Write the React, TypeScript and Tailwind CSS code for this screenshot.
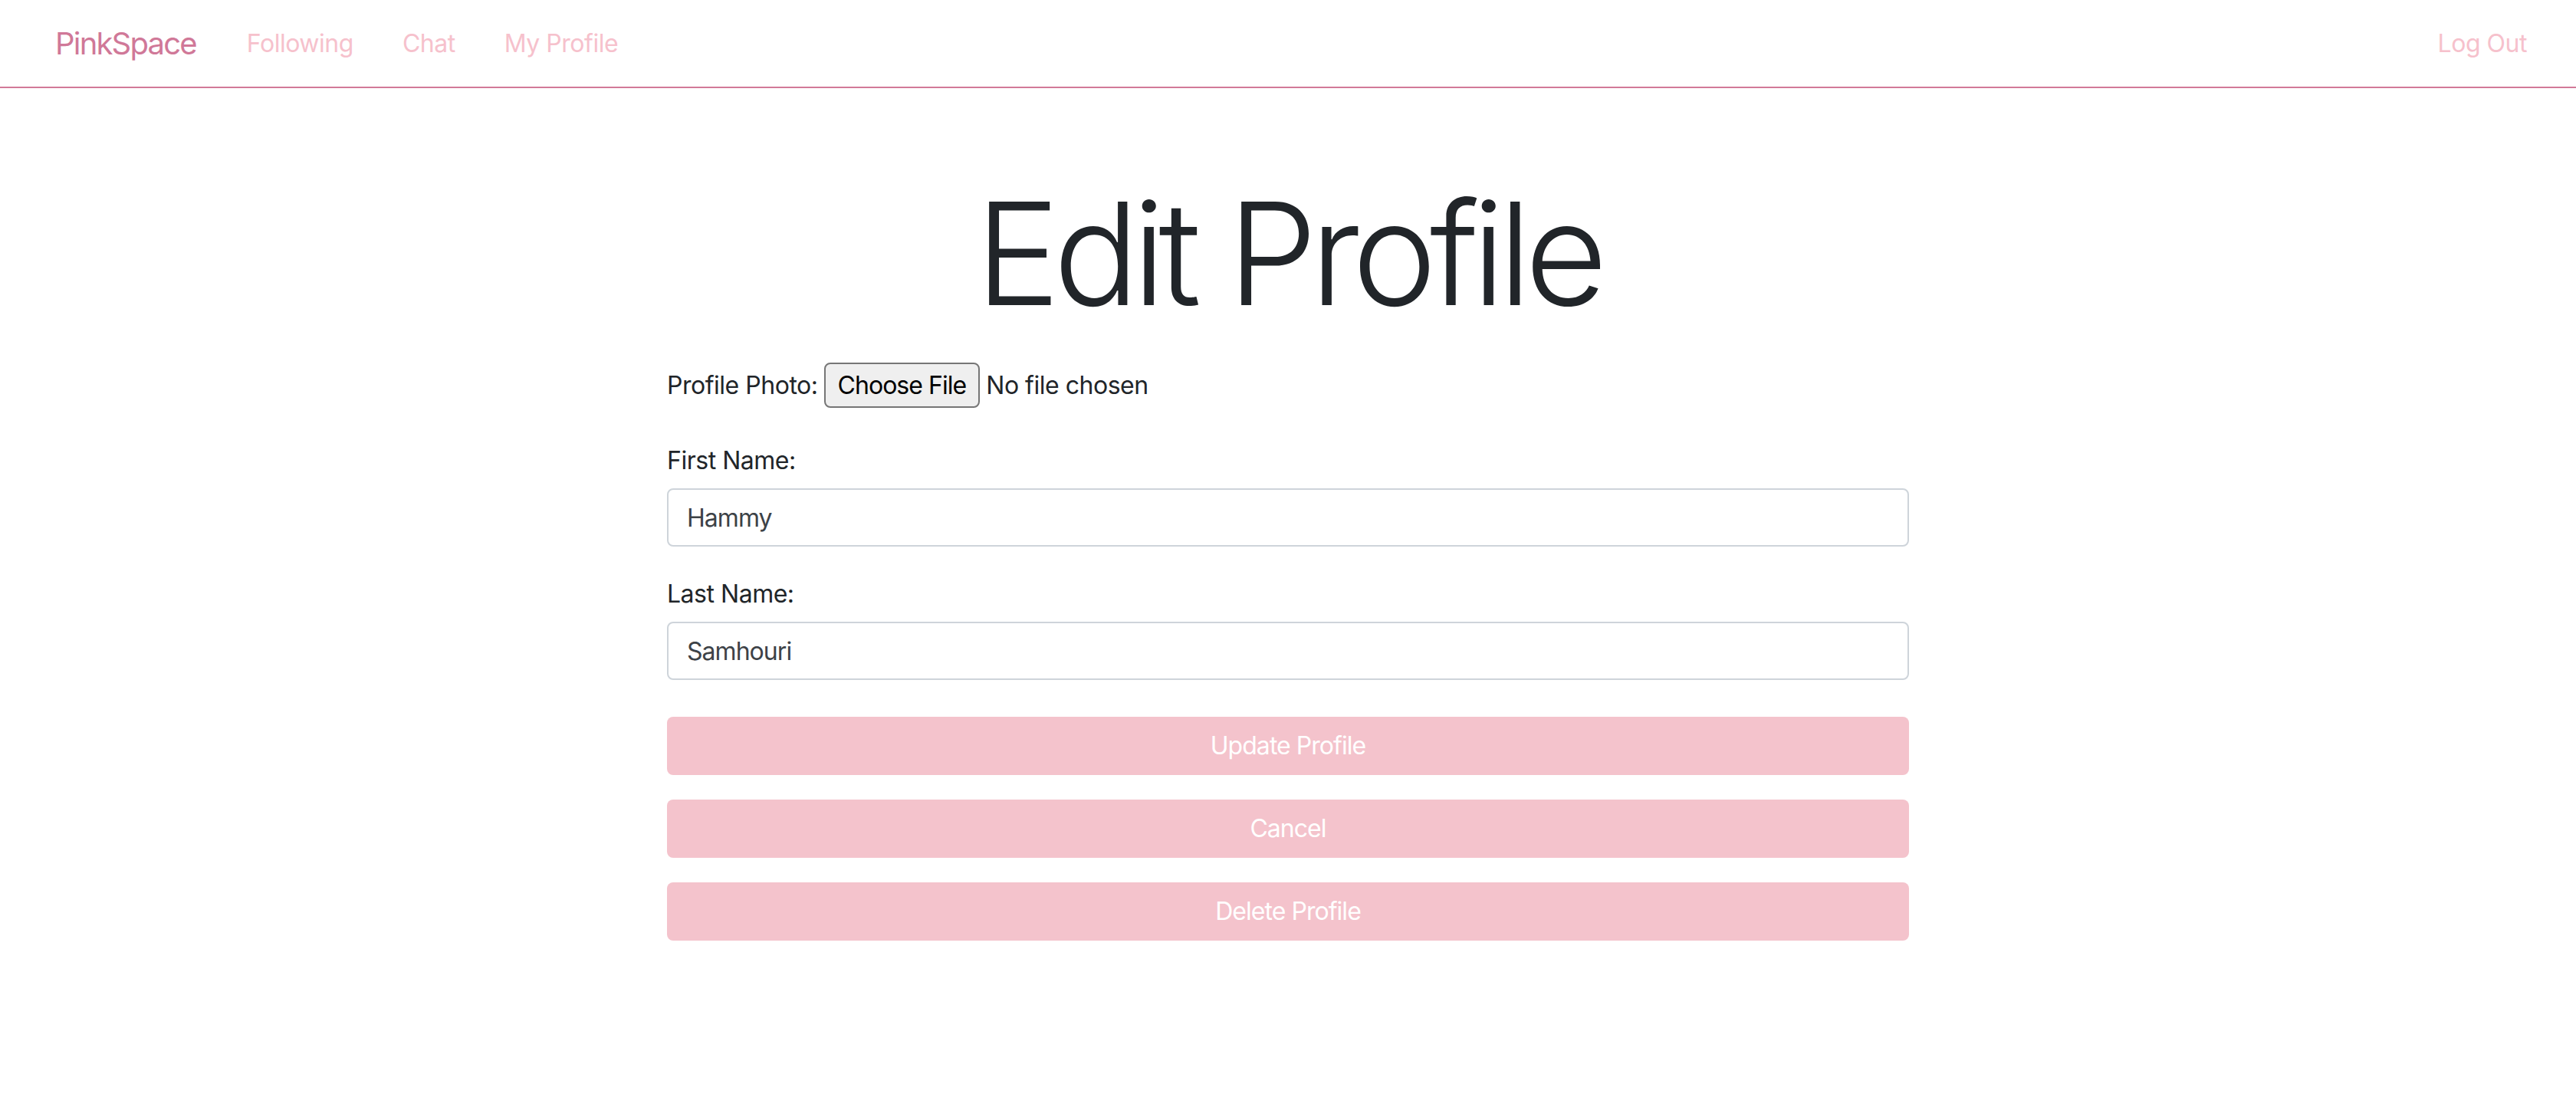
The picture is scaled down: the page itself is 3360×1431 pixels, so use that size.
import React from 'react';

const NAV_LINKS = ['Following', 'Chat', 'My Profile'];

const Navbar: React.FC = () => (
    <nav className="h-[115px] flex items-center justify-between border-b-2 border-[#d27a98] pl-[72px] pr-[64px]">
        <div className="flex items-center">
            <span className="text-[40px] text-[#d07898] leading-none tracking-[-0.045em]">PinkSpace</span>
            <div className="flex items-center gap-[64px] ml-[66px]">
                {NAV_LINKS.map((l) => (
                    <a key={l} className="text-[32px] text-[#f6c1cc] leading-none cursor-pointer">{l}</a>
                ))}
            </div>
        </div>
        <a className="text-[32px] text-[#f6c1cc] leading-none cursor-pointer">Log Out</a>
    </nav>
);

const TextField: React.FC<{ label: string; value: string }> = ({ label, value }) => (
    <div className="flex flex-col mb-[38px]">
        <label className="text-[32px] leading-[48px] text-[#212529] mb-[12px]">{label}</label>
        <input
            defaultValue={value}
            className="h-[76px] w-full border-2 border-[#ced4da] rounded-[8px] px-[24px] text-[32px] text-[#3d4247] tracking-[-0.03em] outline-none"
        />
    </div>
);

export default function App() {
    const buttons = ['Update Profile', 'Cancel', 'Delete Profile'];

    return (
        <div className="min-h-screen bg-white font-['Inter','Liberation_Sans',sans-serif] tracking-[-0.03em] text-[#212529]">
            <Navbar />
            <main className="w-[1620px] mx-auto flex flex-col">
                <h1 className="text-center text-[186px] font-light leading-[1.2] tracking-[-9px] mt-[104px] mb-[31px]">
                    Edit Profile
                </h1>

                {/* photo upload */}
                <div className="flex items-center h-[59px] mb-[45px]">
                    <span className="text-[32px] text-[#212529] mr-[8px]">Profile Photo:</span>
                    <button className="h-[59px] px-[16px] border-2 border-[#767676] rounded-[8px] bg-[#efefef] text-[32px] text-black tracking-[-0.03em]">
                        Choose File
                    </button>
                    <span className="text-[32px] text-[#212529] ml-[8px]">No file chosen</span>
                </div>

                <TextField label="First Name:" value="Hammy" />
                <TextField label="Last Name:" value="Samhouri" />

                <div className="flex flex-col gap-[32px] mt-[10px]">
                    {buttons.map((b) => (
                        <button
                            key={b}
                            className="h-[76px] w-full rounded-[8px] bg-[#f4c3cc] text-white text-[32px] tracking-[-0.03em]"
                        >
                            {b}
                        </button>
                    ))}
                </div>
            </main>
        </div>
    );
}
